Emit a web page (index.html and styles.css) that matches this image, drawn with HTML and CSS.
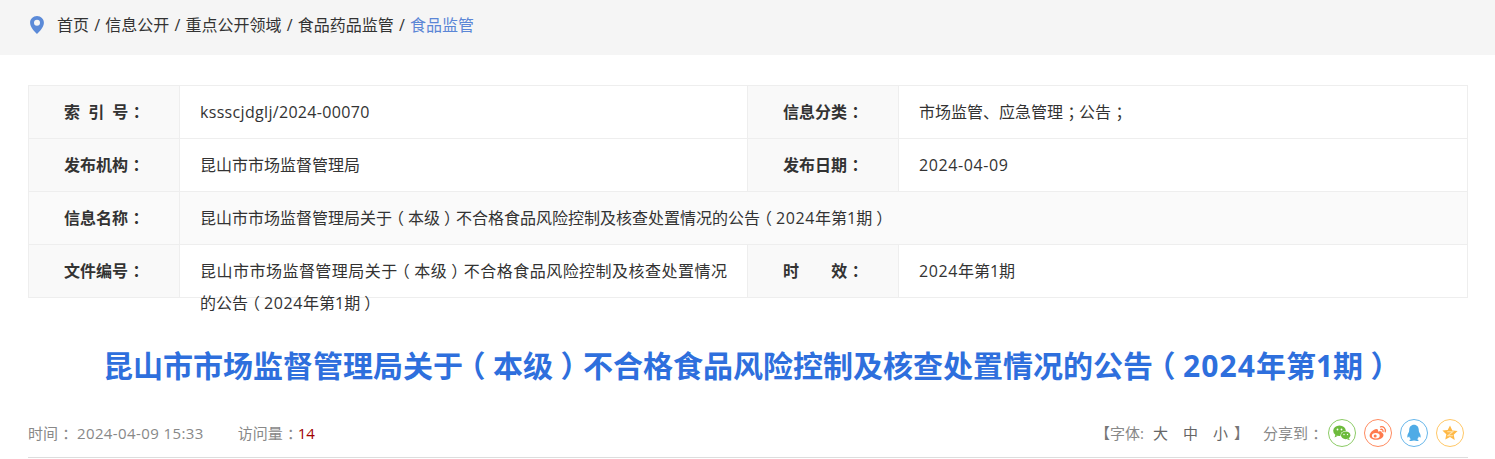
FILE: index.html
```html
<!DOCTYPE html>
<html lang="zh-CN">
<head>
<meta charset="utf-8">
<title>食品监管</title>
<link rel="stylesheet" href="styles.css">
</head>
<body>
<nav class="crumbs">
  <svg class="pin" viewBox="0 0 16 20" width="16" height="20" aria-hidden="true"><path fill-rule="evenodd" fill="#5b8ad8" d="M8 1C4.100 1 1.100 4 1.100 7.700c0 3.900 3.700 8.200 6.900 11.300 3.200-3.100 6.900-7.400 6.900-11.300C14.900 4 11.900 1 8 1zM8 4.700a3 3 0 1 1 0 6 3 3 0 0 1 0-6z"/></svg>
  <a class="crumb">首页</a><span class="sep">/</span><a class="crumb">信息公开</a><span class="sep">/</span><a class="crumb">重点公开领域</a><span class="sep">/</span><a class="crumb">食品药品监管</a><span class="sep">/</span><a class="crumb current">食品监管</a>
</nav>
<main class="content">
  <section class="info">
    <div class="label spaced">索 引 号<span class="mid">：</span></div>
    <div class="value"><span class="code">kssscjdglj/2024-00070</span></div>
    <div class="label">信息分类<span class="mid">：</span></div>
    <div class="value">市场监管、应急管理<span class="mid">；</span>公告<span class="mid">；</span></div>

    <div class="label">发布机构<span class="mid">：</span></div>
    <div class="value">昆山市市场监督管理局</div>
    <div class="label">发布日期<span class="mid">：</span></div>
    <div class="value"><span class="digits">2024-04-09</span></div>

    <div class="label shade">信息名称<span class="mid">：</span></div>
    <div class="value wide shade">昆山市市场监督管理局关于<span class="lp">（</span>本级<span class="rp">）</span>不合格食品风险控制及核查处置情况的公告<span class="lp">（</span><span class="digits">2024</span>年第1期<span class="rp">）</span></div>

    <div class="label">文件编号<span class="mid">：</span></div>
    <div class="value justified">昆山市市场监督管理局关于<span class="lp">（</span>本级<span class="rp">）</span>不合格食品风险控制及核查处置情况的公告<span class="lp">（</span><span class="digits">2024</span>年第1期<span class="rp">）</span></div>
    <div class="label gap">时 效<span class="mid">：</span></div>
    <div class="value"><span class="digits">2024</span>年第1期</div>
  </section>

  <h1 class="title">昆山市市场监督管理局关于<span class="lp">（</span>本级<span class="rp">）</span>不合格食品风险控制及核查处置情况的公告<span class="lp">（</span><span class="digits">2024</span>年第1期<span class="rp">）</span></h1>

  <div class="meta">
    <div class="meta-left">
      <span class="time">时间<span class="mid">：</span> <span class="stamp">2024-04-09 15:33</span></span>
      <span class="visits">访问量<span class="mid">：</span><em class="count">14</em></span>
    </div>
    <div class="meta-right">
      <span class="fonts"><span class="bracket">【</span>字体:<a class="size">大</a><a class="size">中</a><a class="size">小</a><span class="bracket">】</span></span>
      <span class="share-label">分享到<span class="mid">：</span></span>
      <a class="share wechat">
        <svg viewBox="0 0 28 28" aria-hidden="true"><circle cx="14" cy="14" r="13.500" class="ring"/><ellipse cx="11.500" cy="11.800" rx="6.300" ry="5.300" class="glyph"/><path d="M7.500 15.500l-1 3 3-1.500z" class="glyph"/><ellipse cx="17.700" cy="16.300" rx="5.200" ry="4.400" fill="#fff"/><ellipse cx="17.700" cy="16.300" rx="4.700" ry="3.900" class="glyph"/><path d="M20.500 19l1.500 2.200-3-1z" class="glyph"/><circle cx="9.500" cy="10.500" r=".9" fill="#fff"/><circle cx="13.500" cy="10.500" r=".9" fill="#fff"/><circle cx="16" cy="15.500" r=".7" fill="#fff"/><circle cx="19.500" cy="15.500" r=".7" fill="#fff"/></svg>
      </a>
      <a class="share weibo">
        <svg viewBox="0 0 28 28" aria-hidden="true"><circle cx="14" cy="14" r="13.500" class="ring"/><path d="M12 20.800c-3.600 0-6.400-1.700-6.400-4 0-2.800 3.900-6.700 6.800-6.700 1.600 0 2 1.200 1.600 2.700 2-.8 3.800-.6 3.800 1 .9.400 1.700 1.100 1.700 2.200 0 2.700-3.600 4.800-7.500 4.800z" class="glyph"/><ellipse cx="11.800" cy="16.800" rx="3.900" ry="2.700" fill="#fff"/><circle cx="11.200" cy="17" r="1.500" class="glyph"/><path d="M16.500 7.800c3-.7 5.600 2 4.700 5M16.800 10.300c1.500-.3 2.600 1 2.200 2.400" fill="none" stroke="#ff7a4d" stroke-width="1.300" stroke-linecap="round"/></svg>
      </a>
      <a class="share qq">
        <svg viewBox="0 0 28 28" aria-hidden="true"><circle cx="14" cy="14" r="13.500" class="ring"/><path d="M14 5.800c-3 0-4.800 2.300-4.800 5.200 0 .8 0 1.300-.3 1.900-.9 1.600-1.900 3.500-1.500 5.400.3.800 1.200-.2 1.700-1 .3 1.300.9 2.300 1.800 3-.9.300-1.700.8-1.400 1.400.4.600 2.800.5 4.500-.1 1.700.6 4.100.7 4.500.1.300-.6-.5-1.100-1.400-1.400.9-.7 1.500-1.700 1.800-3 .5.800 1.400 1.800 1.700 1 .4-1.900-.6-3.800-1.500-5.400-.3-.6-.3-1.100-.3-1.900 0-2.900-1.800-5.200-4.800-5.200z" class="glyph"/></svg>
      </a>
      <a class="share star">
        <svg viewBox="0 0 28 28" aria-hidden="true"><circle cx="14" cy="14" r="13.500" class="ring"/><path d="M14 6.500l2.300 4.900 5.300.7-3.900 3.700 1 5.300L14 18l-4.700 2.600 1-5.300-3.900-3.700 5.300-.7z" class="glyph"/><path d="M11.300 12.700h5.400l-4.800 4h5" fill="none" stroke="#ffe3b0" stroke-width="1.100"/></svg>
      </a>
    </div>
  </div>
</main>
</body>
</html>
```
FILE: styles.css
```css
* { box-sizing: border-box; }
html, body { margin: 0; padding: 0; background: #fff; }
body {
  font-family: "Open Sans", "Noto Sans CJK SC", sans-serif;
  font-size: 16px;
  color: #333;
  overflow: hidden;
  text-spacing-trim: space-all;
}
a { color: inherit; text-decoration: none; }

/* Full-width punctuation centred in its em box */
.mid, .lp, .rp { display: inline-block; }
.mid { transform: translateX(.28em); }
.lp { transform: translateX(-.25em); }
.rp { transform: translateX(.25em); }
.digits { letter-spacing: .037em; }

.crumbs {
  display: flex;
  align-items: center;
  height: 55px;
  padding: 0 0 5px 29px;
  background: #f5f5f5;
  line-height: 24px;
}
.pin { margin-right: 12px; flex: none; }
.sep { margin: 0 5.200px; }
.current { color: #5b86d6; }

.content { padding: 30px 27px 0 28px; }

.info {
  display: grid;
  grid-template-columns: 151px 568px 151px 1fr;
  grid-auto-rows: 53px;
  border-top: 1px solid #eee;
  border-left: 1px solid #eee;
}
.label, .value {
  border-right: 1px solid #eee;
  border-bottom: 1px solid #eee;
  height: 53px;
  line-height: 32px;
  padding-top: 10px;
}
.label {
  padding-left: 35px;
  font-weight: 700;
  background: #f9f9f9;
  white-space: pre;
}
.label.spaced { word-spacing: 4px; }
.label.gap { word-spacing: 28px; }
.value { padding-left: 20px; padding-right: 20px; }
.value.wide { grid-column: 2 / 5; }
.value.justified { text-align: justify; }
.shade { background: #fafafa; }
.code { letter-spacing: .32px; }

.title {
  margin: 34px 0 0;
  font-size: 30px;
  line-height: 68px;
  font-weight: 700;
  text-align: center;
  color: #2e6fdd;
}

.meta {
  display: flex;
  justify-content: space-between;
  align-items: center;
  height: 50px;
  margin-top: 8px;
  border-bottom: 1px solid #ddd;
  font-size: 15px;
  color: #888;
}
.meta-left { display: flex; gap: 34px; }
.stamp { letter-spacing: .4px; }
.count { font-style: normal; color: #a00000; }
.meta-right { display: flex; align-items: center; margin-right: 4px; }
.fonts { display: flex; margin-right: 14px; }
.bracket { color: #777; }
.size { margin-left: 15px; color: #666; }
.size:first-of-type { margin-left: 9px; }
.size:last-of-type { margin-right: 6px; }
.share-label { margin-right: -3px; }
.share { display: block; width: 28px; height: 28px; margin-left: 8px; }
.share svg { display: block; width: 28px; height: 28px; }
.ring { fill: #fff; stroke-width: 1; }
.wechat .ring { stroke: #8ccb66; }
.wechat .glyph { fill: #6dbb3c; }
.weibo .ring { stroke: #ff8a5f; }
.weibo .glyph { fill: #ff7a4d; }
.qq .ring { stroke: #66b6ea; }
.qq .glyph { fill: #4fabe6; }
.star .ring { stroke: #ffc766; }
.star .glyph { fill: #ffb845; }
```
